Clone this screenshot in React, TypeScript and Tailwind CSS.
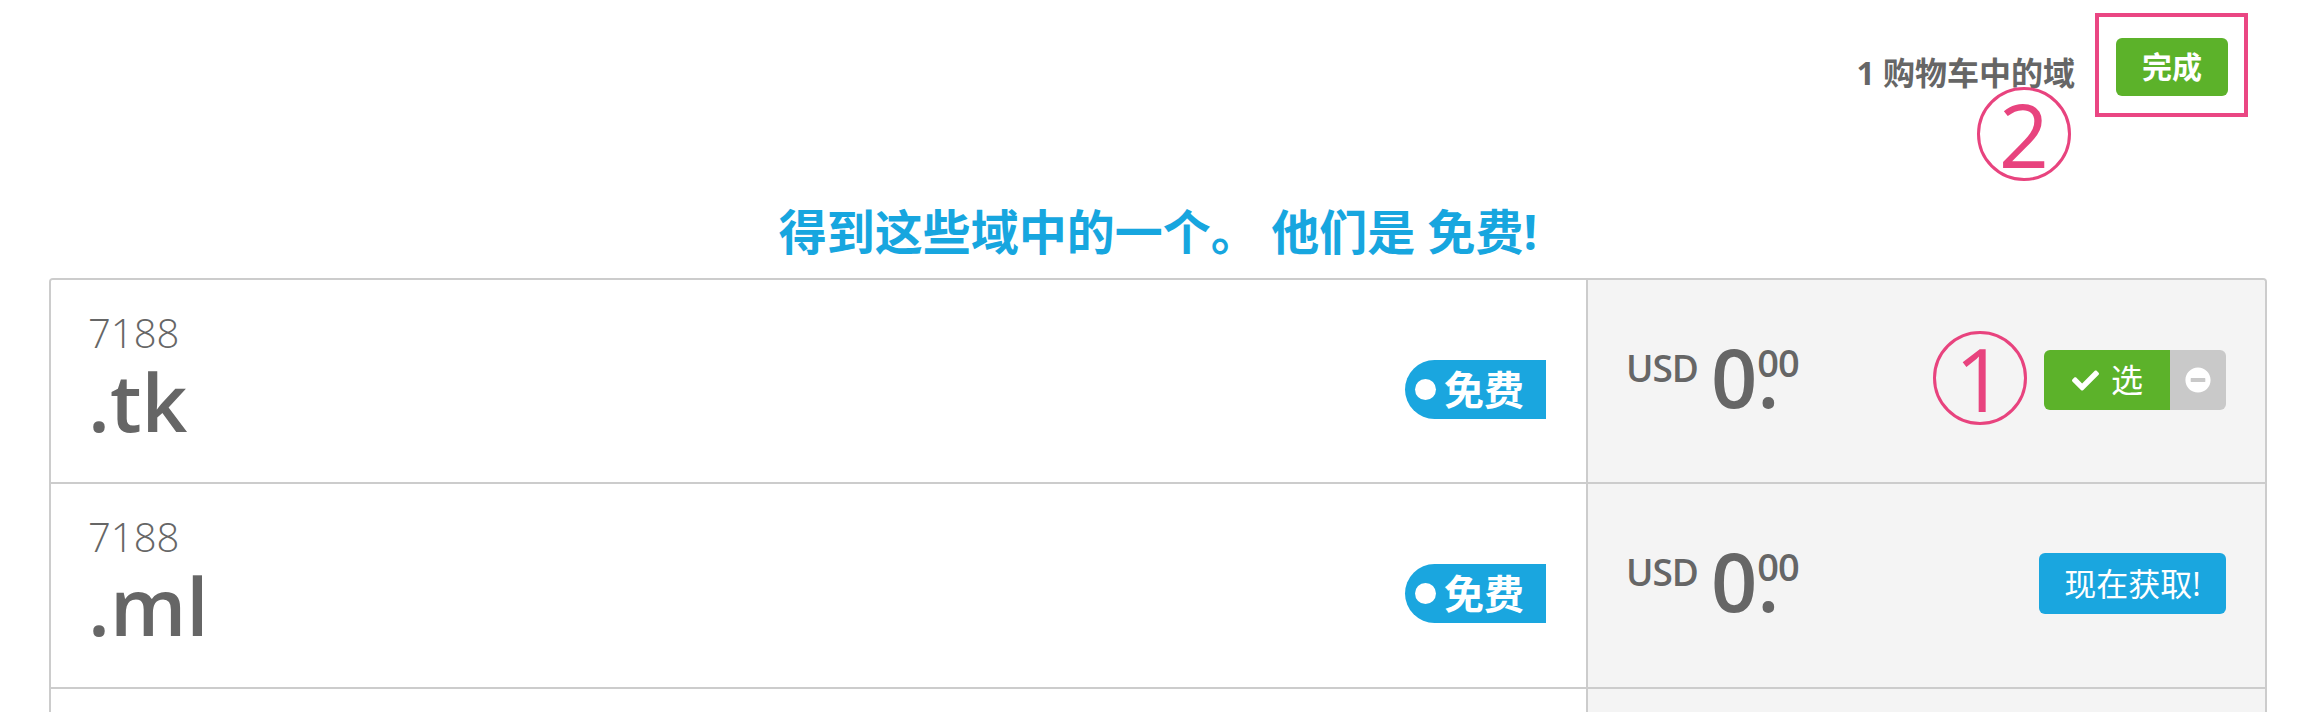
import { FaCheck, FaMinusCircle } from "react-icons/fa";

type Row = { tld: string; selected: boolean };

const rows: Row[] = [
  { tld: ".tk", selected: true },
  { tld: ".ml", selected: false },
];

function Price() {
  return (
    <div className="flex items-start">
      <span className="mt-[13px] mr-[13px] text-[37px] leading-[37px] font-semibold tracking-[-1px]">USD</span>
      <span className="text-[81px] leading-[81px] font-semibold">0</span>
      <div className="flex flex-col items-start">
        <span className="mt-[7px] text-[38px] leading-[38px] font-semibold tracking-[-1px]">00</span>
        <span className="mt-[-4px] h-0 text-[81px] leading-[0px] font-semibold">.</span>
      </div>
    </div>
  );
}

function DomainRow({ row, first }: { row: Row; first: boolean }) {
  return (
    <div
      className={`grid grid-cols-[1537px_1fr] ${
        first ? "h-[202px]" : "h-[205px] border-t-2 border-[#cccccc]"
      }`}
    >
      {/* name + badge */}
      <div className="flex justify-between items-start pl-[37px] pr-[40px] border-r-2 border-[#cccccc] bg-white">
        <div className="pt-[33px]">
          <div className="text-[40px] leading-[40px] font-light">7188</div>
          <div className="mt-[8px] text-[80px] leading-[80px] font-semibold">{row.tld}</div>
        </div>
        <div className="mt-[80px] flex items-center w-[141px] h-[59px] pl-[10px] gap-[8px] rounded-l-full rounded-r-[5px] bg-[#1aa6df] text-white">
          <span className="w-[21px] h-[21px] rounded-full bg-white" />
          <span className="text-[40px] leading-[40px] font-bold">免费</span>
        </div>
      </div>

      {/* price + action */}
      <div className="flex justify-between items-start pl-[38px] pr-[39px] pt-[56px] bg-[#f4f4f4]">
        <Price />
        {row.selected ? (
          <div className="mt-[14px] flex h-[60px] w-[182px] overflow-hidden rounded-[6px]">
            <div className="flex items-center w-[126px] pl-[28px] gap-[12px] bg-[#5cb22a] text-white">
              <FaCheck size={27} />
              <span className="text-[32px] leading-[32px]">选</span>
            </div>
            <div className="flex flex-1 items-center justify-center bg-[#c9c9c9] text-white">
              <FaMinusCircle size={26} />
            </div>
          </div>
        ) : (
          <button className="mt-[13px] h-[61px] w-[187px] rounded-[6px] bg-[#1aa6df] text-white text-[32px] leading-[32px]">
            现在获取!
          </button>
        )}
      </div>
    </div>
  );
}

export default function App() {
  return (
    <div className="relative w-[2312px] h-[712px] overflow-hidden bg-white text-[#666666] font-['Open_Sans','Noto_Sans_CJK_SC',sans-serif]">
      {/* top bar */}
      <div className="flex justify-end items-start pt-[13px] pr-[64px]">
        <span className="mt-[44px] mr-[20px] text-[32px] leading-[32px] font-bold">1 购物车中的域</span>
        <div className="border-4 border-[#ea4683] pl-[17px] pr-[16px] pt-[21px] pb-[17px]">
          <button className="w-[112px] h-[58px] rounded-[6px] bg-[#5cb22a] text-white text-[30px] leading-[30px] font-bold">
            完成
          </button>
        </div>
      </div>

      <h2 className="ml-[49px] w-[2218px] mt-[87px] h-[56px] text-center text-[48px] leading-[56px] font-bold text-[#17a6df]">
        得到这些域中的一个。 他们是 免费!
      </h2>

      {/* domain list */}
      <div className="ml-[49px] w-[2218px] mt-[18px] border-2 border-b-0 border-[#cccccc] rounded-t-[4px] overflow-hidden">
        {rows.map((r, i) => (
          <DomainRow key={r.tld} row={r} first={i === 0} />
        ))}
        <div className="grid grid-cols-[1537px_1fr] h-[60px] border-t-2 border-[#cccccc]">
          <div className="border-r-2 border-[#cccccc] bg-white" />
          <div className="bg-[#f4f4f4]" />
        </div>
      </div>

      {/* annotations */}
      <div className="absolute left-[1977px] top-[87px] flex items-center justify-center w-[94px] h-[94px] rounded-full border-[3px] border-[#e8437e] text-[#e8437e] text-[88px] leading-none">
        2
      </div>
      <div className="absolute left-[1933px] top-[331px] flex items-center justify-center w-[94px] h-[94px] rounded-full border-[3px] border-[#e8437e] text-[#e8437e] text-[88px] leading-none">
        1
      </div>
    </div>
  );
}
